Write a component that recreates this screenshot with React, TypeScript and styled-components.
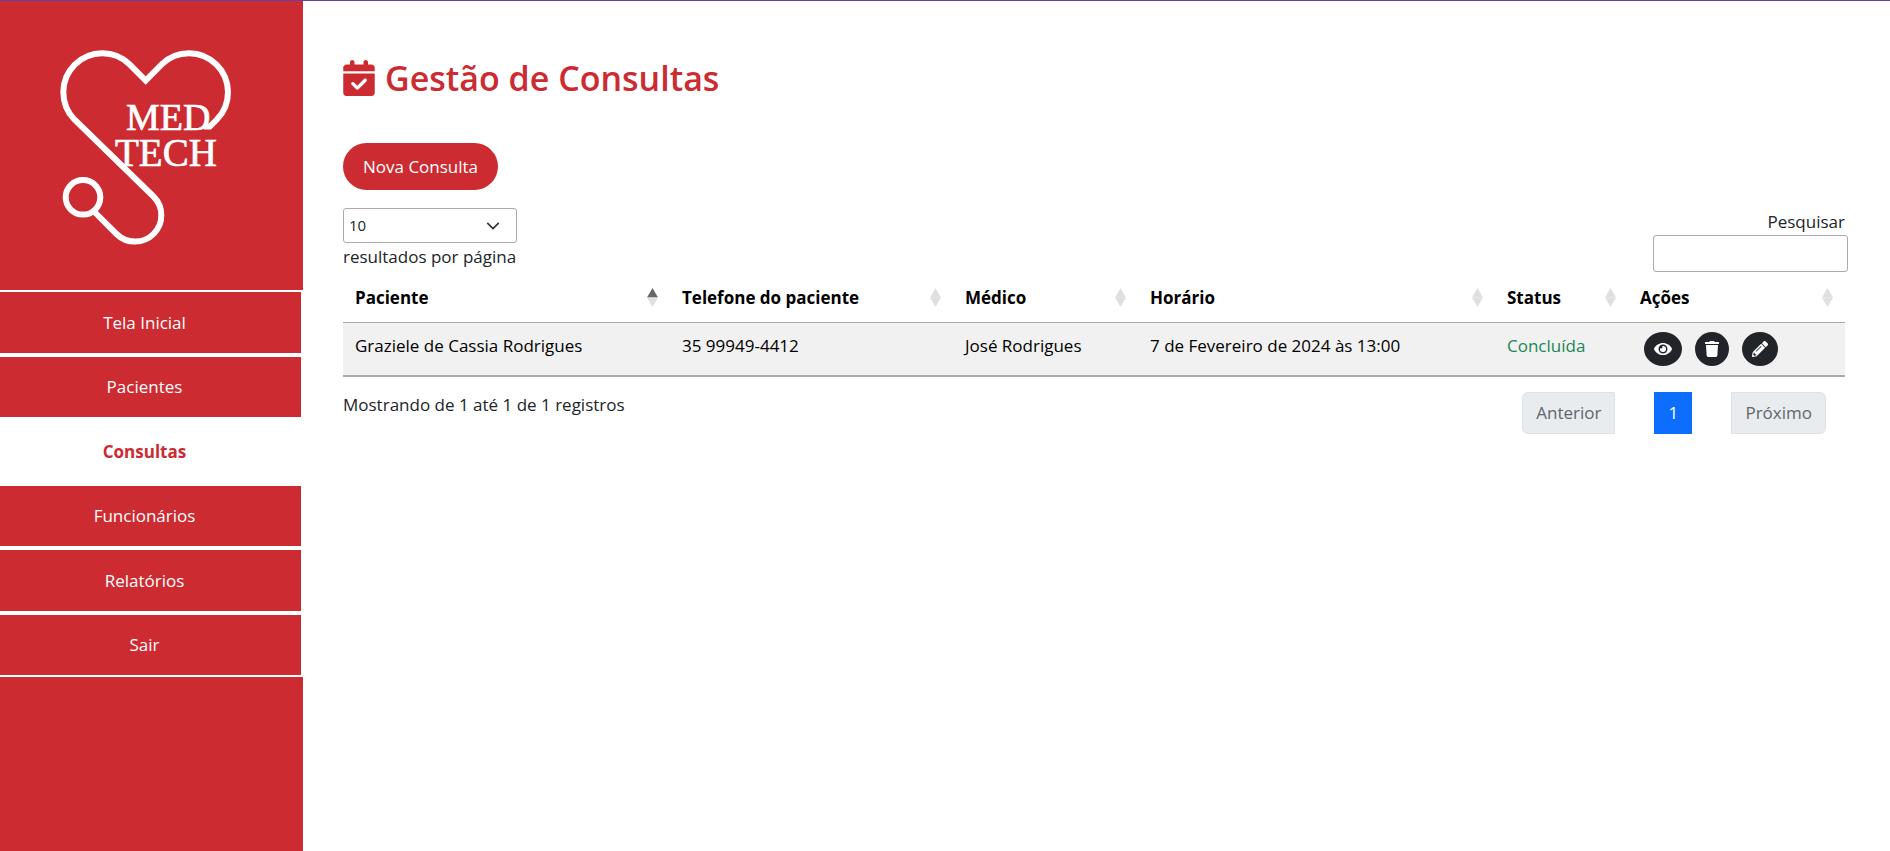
import React from "react";
import styled, { createGlobalStyle } from "styled-components";
import { FaCalendarCheck } from "react-icons/fa6";
import { FaEye, FaPencilAlt, FaTrash } from "react-icons/fa";

const red = "#cc2b31";
const line = "#aaaaaa";

const GlobalStyle = createGlobalStyle`
  *, *::before, *::after { box-sizing: border-box; }
  body {
    margin: 0;
    background: #ffffff;
    color: #212529;
    font-family: "Open Sans", "Noto Sans", sans-serif;
    font-size: 17px;
    line-height: 27px;
  }
  button, input, select { font: inherit; color: inherit; }
`;

const Page = styled.div`
  display: flex;
  min-height: 100vh;
  border-top: 1px solid #6b3fa0;
`;

const Sidebar = styled.aside`
  flex: 0 0 303px;
  background: ${red};
`;

const LogoDrawing = styled.svg`
  display: block;
  width: 303px;
  height: 289px;
  font-family: "Liberation Serif", serif;
`;

const Nav = styled.nav`
  display: grid;
  grid-auto-rows: 1fr;
  min-height: 387px;
`;

const NavLink = styled.a<{ $active?: boolean }>`
  display: flex;
  align-items: center;
  justify-content: center;
  padding-right: 12px;
  border: 2px solid #ffffff;
  border-left: 0;
  background: ${(p) => (p.$active ? "#ffffff" : red)};
  color: ${(p) => (p.$active ? red : "#ffffff")};
  font-weight: ${(p) => (p.$active ? 700 : 400)};
  text-decoration: none;
`;

const Main = styled.main`
  flex: 1;
  min-width: 0;
  padding: 48px 45px 48px 40px;
`;

const Title = styled.h1`
  display: flex;
  align-items: center;
  gap: 10px;
  margin: 0;
  color: ${red};
  font-size: 34px;
  font-weight: 600;
  line-height: 58px;

  svg { width: 32px; height: 36px; }
`;

const NewButton = styled.button`
  display: block;
  height: 47px;
  margin-top: 36px;
  padding: 0 20px;
  border: 0;
  border-radius: 24px;
  background: ${red};
  color: #ffffff;
`;

const Controls = styled.div`
  display: flex;
  justify-content: space-between;
  margin-top: 18px;
`;

const LengthLabel = styled.label`
  display: flex;
  flex-direction: column;
  width: 174px;
`;

const SelectFrame = styled.span`
  display: grid;
  align-items: center;

  > * { grid-area: 1 / 1; }
  svg { justify-self: end; margin-right: 17px; pointer-events: none; }
`;

const LengthSelect = styled.select`
  appearance: none;
  height: 35px;
  padding: 0 5px;
  border: 1px solid ${line};
  border-radius: 3px;
  background: #ffffff;
  font-size: 15px;
`;

const SearchLabel = styled.label`
  display: flex;
  flex-direction: column;
  align-items: flex-end;
`;

const SearchInput = styled.input`
  width: 195px;
  height: 37px;
  margin-right: -3px;
  padding: 5px;
  border: 1px solid ${line};
  border-radius: 3px;
  background: transparent;
`;

const Table = styled.table`
  width: 100%;
  margin-top: 3px;
  table-layout: fixed;
  border-collapse: separate;
  border-spacing: 0;
  border-bottom: 2px solid ${line};
  color: #000000;
`;

const HeadCell = styled.th<{ $width: number }>`
  width: ${(p) => p.$width}px;
  height: 48px;
  padding: 0 12px 2px;
  border-bottom: 1px solid ${line};
`;

const SortButton = styled.button`
  display: flex;
  align-items: center;
  justify-content: space-between;
  width: 100%;
  padding: 0;
  border: 0;
  background: none;
  font-weight: 700;
`;

const Cell = styled.td<{ $done?: boolean }>`
  height: 52px;
  padding: 9px 12px;
  background: #f1f1f1;
  vertical-align: top;
  color: ${(p) => (p.$done ? "#198754" : "inherit")};
`;

const Actions = styled.div`
  display: flex;
  gap: 13px;
  padding-left: 4px;
`;

const ActionButton = styled.button<{ $icon: number }>`
  display: flex;
  align-items: center;
  height: 34px;
  padding: 0 10px;
  border: 0;
  border-radius: 50%;
  background: #212529;
  color: #ffffff;

  svg { width: ${(p) => p.$icon}px; height: 16px; }
`;

const Footer = styled.div`
  display: flex;
  justify-content: space-between;
  padding: 15px 19px 0 0;
`;

const Summary = styled.span`
  line-height: 25px;
`;

const Pagination = styled.nav`
  display: flex;
  gap: 39px;
`;

const PageButton = styled.button<{ $kind: "first" | "current" | "last" }>`
  min-width: 38px;
  height: 42px;
  padding: 0 13px 2px;
  border: 1px solid ${(p) => (p.$kind === "current" ? "#0d6efd" : "#dee2e6")};
  border-radius: ${(p) =>
    p.$kind === "first" ? "6px 0 0 6px" : p.$kind === "last" ? "0 6px 6px 0" : "0"};
  background: ${(p) => (p.$kind === "current" ? "#0d6efd" : "#e9ecef")};
  color: ${(p) => (p.$kind === "current" ? "#ffffff" : "#5f666d")};
`;

const Logo = () => (
  <LogoDrawing viewBox="0 1 303 289" role="img" aria-label="Med Tech">
    <g fill="none" stroke="#ffffff" strokeWidth="6">
      <path d="M204 126.6H209.8L216.9 119.5A39 39 0 0 0 161.7 64.4L145.7 80.6L129.6 64.4A39 39 0 0 0 74.4 119.5L153.5 196.5A26.2 26.2 0 0 1 116.5 234L95 212.5" />
      <circle cx="83" cy="197.3" r="17.3" />
    </g>
    <g fill="#ffffff" stroke="#ffffff" strokeWidth="0.7">
      <text x="126" y="130" fontSize="38">MED</text>
      <text x="115" y="166" fontSize="39">TECH</text>
    </g>
  </LogoDrawing>
);

const SortIcon = ({ ascending }: { ascending?: boolean }) => (
  <svg width="11" height="19" viewBox="0 0 11 19" aria-hidden="true">
    <path d="M5.5 0L11 9.5H0Z" fill={ascending ? "#666666" : "#dfdfdf"} />
    <path d="M0 9.5H11L5.5 19Z" fill="#dfdfdf" />
  </svg>
);

const links = ["Tela Inicial", "Pacientes", "Consultas", "Funcionários", "Relatórios", "Sair"];

const columns = [
  { name: "Paciente", width: 327 },
  { name: "Telefone do paciente", width: 283 },
  { name: "Médico", width: 185 },
  { name: "Horário", width: 357 },
  { name: "Status", width: 133 },
  { name: "Ações", width: 217 },
];

export default function App() {
  return (
    <>
      <GlobalStyle />
      <Page>
        <Sidebar>
          <Logo />
          <Nav>
            {links.map((name) => (
              <NavLink key={name} href="#" $active={name === "Consultas"}>
                {name}
              </NavLink>
            ))}
          </Nav>
        </Sidebar>
        <Main>
          <Title>
            <FaCalendarCheck />
            Gestão de Consultas
          </Title>
          <NewButton type="button">Nova Consulta</NewButton>
          <Controls>
            <LengthLabel>
              <SelectFrame>
                <LengthSelect defaultValue="10">
                  <option>10</option>
                  <option>25</option>
                  <option>50</option>
                  <option>100</option>
                </LengthSelect>
                <svg width="14" height="14" viewBox="0 0 16 16">
                  <path
                    d="m2 5 6 6 6-6"
                    fill="none"
                    stroke="#343a40"
                    strokeWidth="2"
                    strokeLinecap="round"
                    strokeLinejoin="round"
                  />
                </svg>
              </SelectFrame>
              resultados por página
            </LengthLabel>
            <SearchLabel>
              Pesquisar
              <SearchInput type="search" />
            </SearchLabel>
          </Controls>
          <Table>
            <thead>
              <tr>
                {columns.map((column, i) => (
                  <HeadCell key={column.name} $width={column.width}>
                    <SortButton type="button">
                      {column.name}
                      <SortIcon ascending={i === 0} />
                    </SortButton>
                  </HeadCell>
                ))}
              </tr>
            </thead>
            <tbody>
              <tr>
                <Cell>Graziele de Cassia Rodrigues</Cell>
                <Cell>35 99949-4412</Cell>
                <Cell>José Rodrigues</Cell>
                <Cell>7 de Fevereiro de 2024 às 13:00</Cell>
                <Cell $done>Concluída</Cell>
                <Cell>
                  <Actions>
                    <ActionButton type="button" aria-label="Ver" $icon={18}><FaEye /></ActionButton>
                    <ActionButton type="button" aria-label="Excluir" $icon={14}><FaTrash /></ActionButton>
                    <ActionButton type="button" aria-label="Editar" $icon={16}><FaPencilAlt /></ActionButton>
                  </Actions>
                </Cell>
              </tr>
            </tbody>
          </Table>
          <Footer>
            <Summary>Mostrando de 1 até 1 de 1 registros</Summary>
            <Pagination aria-label="Paginação">
              <PageButton type="button" $kind="first">Anterior</PageButton>
              <PageButton type="button" $kind="current">1</PageButton>
              <PageButton type="button" $kind="last">Próximo</PageButton>
            </Pagination>
          </Footer>
        </Main>
      </Page>
    </>
  );
}
